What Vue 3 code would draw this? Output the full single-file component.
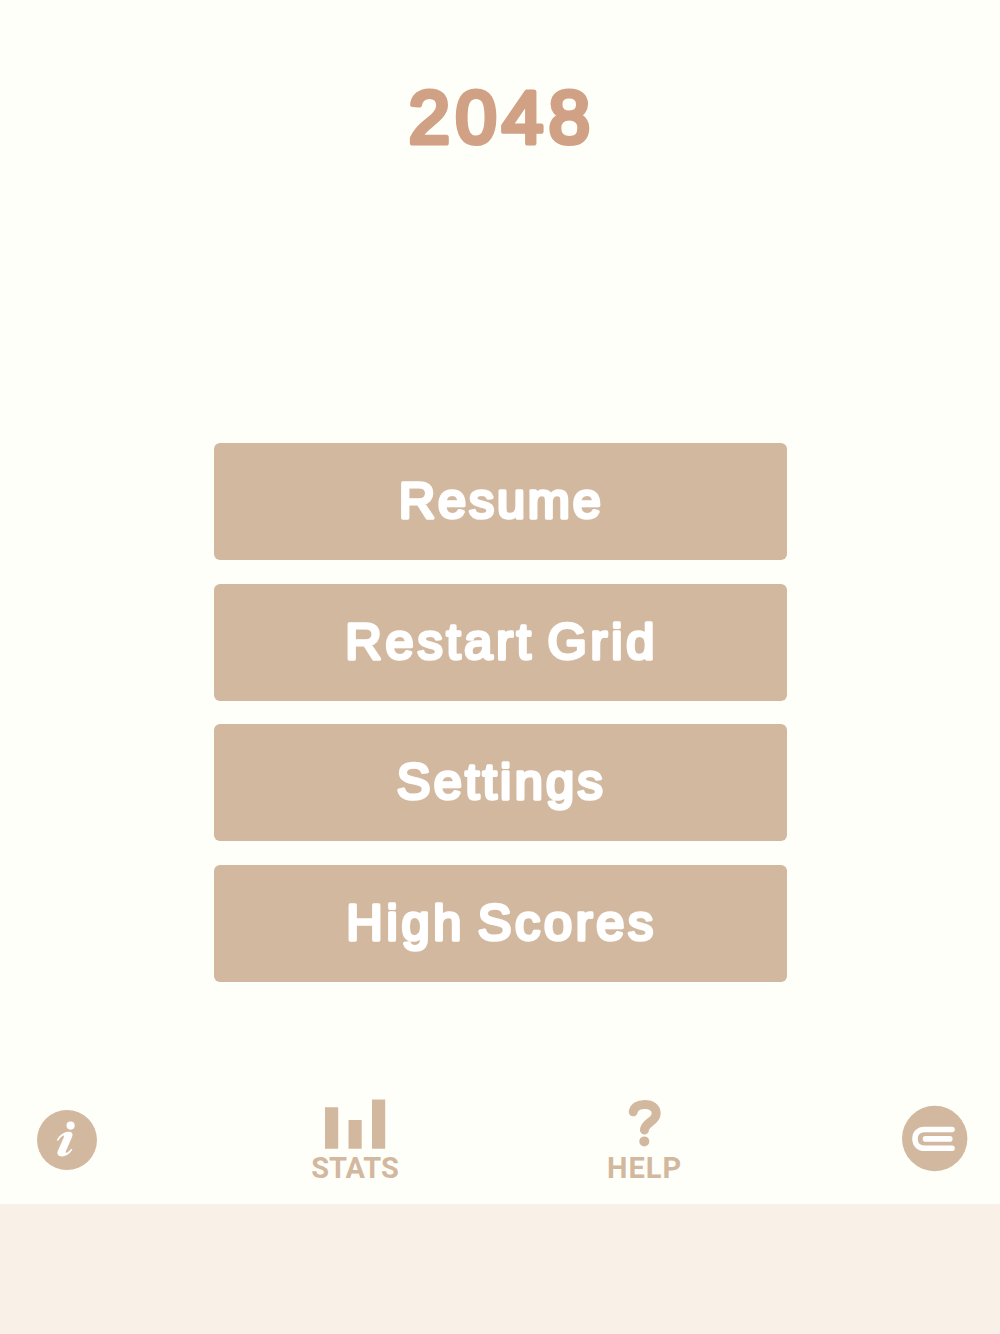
<script setup>
const buttons = [
  { label: 'Resume', width: 202 },
  { label: 'Restart Grid', width: 309 },
  { label: 'Settings', width: 206 },
  { label: 'High Scores', width: 307 }
]
</script>

<template>
  <div class="menu">
    <header class="menu__header">
      <svg class="title" viewBox="0 0 240 120" aria-label="2048">
        <text x="119.3" y="85" textLength="181" text-anchor="middle">2048</text>
      </svg>
    </header>

    <main class="menu__buttons">
      <button v-for="b in buttons" :key="b.label" class="btn">
        <svg class="btn__label" viewBox="0 0 573 117">
          <text x="285.8" y="75" :textLength="b.width" text-anchor="middle">{{ b.label }}</text>
        </svg>
      </button>
    </main>

    <nav class="menu__nav">
      <button class="nav-item nav-item--info" aria-label="Info">
        <svg viewBox="0 0 60 60" width="60" height="60">
          <circle class="fill" cx="30" cy="30" r="30" />
          <circle class="glyph" cx="33.6" cy="15.6" r="4.1" />
          <path class="glyph" d="M19.8 30C22.6 25 26.7 22.2 31 21.8C35 21.6 36.2 23.6 35.2 26.5L29 41C28.4 42.8 29 43.2 30.2 42.5C31.8 41.6 33 40.4 34.2 38.8L35.4 39.6C32.8 43.9 29.2 46.4 25.2 46.4C21 46.4 19.6 43.9 20.8 41L26.7 27.6C27.4 25.8 26.9 25.2 25.6 25.9C23.7 27 22.4 28.7 21 31Z" />
        </svg>
      </button>

      <button class="nav-item nav-item--stats">
        <svg viewBox="0 0 60 50" width="60" height="50">
          <path class="fill" d="M0 7.2H13.2V48.8H0ZM23.5 20H36.7V48.8H23.5ZM47 -0.5H60.2V48.8H47Z" />
        </svg>
        <span class="nav-item__text">STATS</span>
      </button>

      <button class="nav-item nav-item--help">
        <svg viewBox="0 0 34 50" width="34" height="50">
          <path class="question" d="M5.2 11.8C6 7 10.5 4.4 16.6 4.4C23.6 4.4 28.2 7.8 28.2 13.4C28.2 21.4 17.2 22 16.4 30" />
          <circle class="fill" cx="16.3" cy="41.4" r="5" />
        </svg>
        <span class="nav-item__text">HELP</span>
      </button>

      <button class="nav-item nav-item--clip" aria-label="More">
        <svg viewBox="0 0 66 66" width="66" height="66">
          <circle class="fill" cx="32.7" cy="32.5" r="32.7" />
          <path class="clip" d="M50 23.5H22.4C16.8 23.5 13 27.3 13 32.8C13 38.5 16.8 42.3 22.4 42.3H50M23.5 32.9H47.8" />
        </svg>
      </button>
    </nav>

    <footer class="menu__banner"></footer>
  </div>
</template>

<style>
body {
  margin: 0;
  background: #fffffa;
}
</style>

<style scoped>
.menu {
  display: flex;
  flex-direction: column;
  height: 1334px;
  background: #fffffa;
  font-family: "Liberation Sans", Arial, sans-serif;
}

.menu__header {
  display: flex;
  justify-content: center;
  box-sizing: border-box;
  height: 443px;
  padding-top: 58px;
}

.title {
  width: 240px;
  height: 120px;
}

.title text {
  font-size: 74px;
  fill: #d0a184;
  stroke: #d0a184;
  stroke-width: 5.2px;
  stroke-linejoin: round;
}

.menu__buttons {
  display: flex;
  flex-direction: column;
  align-items: center;
  gap: 23.7px;
}

button {
  padding: 0;
  border: none;
  background: none;
  font-family: inherit;
  cursor: pointer;
}

.btn {
  width: 573px;
  height: 117px;
  border-radius: 6px;
  background: #d3b8a0;
}

.btn__label {
  display: block;
  width: 573px;
  height: 117px;
}

.btn__label text {
  font-size: 50.5px;
  word-spacing: -5px;
  fill: #ffffff;
  stroke: #ffffff;
  stroke-width: 3.5px;
  stroke-linejoin: round;
}

.menu__nav {
  display: flex;
  align-items: flex-start;
  flex: 1;
  padding: 117.5px 32.5px 0 36.5px;
}

.nav-item {
  display: flex;
  flex-direction: column;
  align-items: center;
}

.nav-item svg {
  overflow: visible;
}

.nav-item--info {
  width: 60px;
  margin-top: 10px;
}

.nav-item--stats {
  width: 88px;
  margin-left: 214.5px;
}

.nav-item--help {
  width: 76px;
  margin-left: 207.5px;
}

.nav-item--clip {
  width: 66px;
  margin-top: 6px;
  margin-left: auto;
}

.nav-item__text {
  margin-top: 3px;
  font-family: Roboto, sans-serif;
  font-size: 29px;
  font-weight: 700;
  line-height: 30px;
  letter-spacing: 1px;
  color: #d3b8a0;
}

.nav-item--stats .nav-item__text {
  letter-spacing: 0;
}

.fill {
  fill: #d3b8a0;
}

.glyph {
  fill: #ffffff;
}

.question {
  fill: none;
  stroke: #d3b8a0;
  stroke-width: 9px;
  stroke-linecap: round;
}

.clip {
  fill: none;
  stroke: #ffffff;
  stroke-width: 5.6px;
  stroke-linecap: round;
}

.menu__banner {
  height: 130px;
  background: #f9f0e8;
}
</style>
